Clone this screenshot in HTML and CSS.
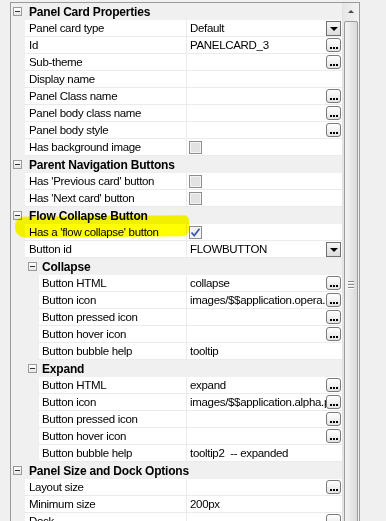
FILE: index.html
```html
<!DOCTYPE html>
<html lang="en">

<head>
    <meta charset="UTF-8">
    <meta name="viewport" content="width=device-width, initial-scale=1.0">
    <title>Panel Card Properties</title>
    <link rel="stylesheet" href="styles.css">
</head>

<body>
    <div class="wrap">
        <div class="grid">
            <div class="rows">
                <div class="cat"><span class="tog"></span><span class="cat-text">Panel Card Properties</span></div>
                <div class="row"><div class="gutter"></div><div class="name">Panel card type</div><div class="val"><span class="text">Default</span><span class="drop"></span></div></div>
                <div class="row"><div class="gutter"></div><div class="name">Id</div><div class="val"><span class="text">PANELCARD_3</span><span class="dots"></span></div></div>
                <div class="row"><div class="gutter"></div><div class="name">Sub-theme</div><div class="val"><span class="text"></span><span class="dots"></span></div></div>
                <div class="row"><div class="gutter"></div><div class="name">Display name</div><div class="val"><span class="text"></span></div></div>
                <div class="row"><div class="gutter"></div><div class="name">Panel Class name</div><div class="val"><span class="text"></span><span class="dots"></span></div></div>
                <div class="row"><div class="gutter"></div><div class="name">Panel body class name</div><div class="val"><span class="text"></span><span class="dots"></span></div></div>
                <div class="row"><div class="gutter"></div><div class="name">Panel body style</div><div class="val"><span class="text"></span><span class="dots"></span></div></div>
                <div class="row"><div class="gutter"></div><div class="name">Has background image</div><div class="val"><span class="chk"></span></div></div>

                <div class="cat"><span class="tog"></span><span class="cat-text">Parent Navigation Buttons</span></div>
                <div class="row"><div class="gutter"></div><div class="name">Has 'Previous card' button</div><div class="val"><span class="chk"></span></div></div>
                <div class="row"><div class="gutter"></div><div class="name">Has 'Next card' button</div><div class="val"><span class="chk"></span></div></div>

                <div class="cat"><span class="tog"></span><span class="cat-text">Flow Collapse Button</span></div>
                <div class="row"><div class="gutter"></div><div class="name">Has a 'flow collapse' button</div><div class="val"><span class="chk on"><svg width="11" height="11" viewBox="0 0 11 11"><path d="M1.5 5.5 L4.2 8.5 L9.5 1.8" fill="none" stroke="#3a5cb0" stroke-width="1.8"/></svg></span></div></div>
                <div class="row"><div class="gutter"></div><div class="name">Button id</div><div class="val"><span class="text">FLOWBUTTON</span><span class="drop"></span></div></div>

                <div class="cat sub"><span class="tog"></span><span class="cat-text">Collapse</span></div>
                <div class="row sub"><div class="gutter"></div><div class="name">Button HTML</div><div class="val"><span class="text">collapse</span><span class="dots"></span></div></div>
                <div class="row sub"><div class="gutter"></div><div class="name">Button icon</div><div class="val"><span class="text">images/$$application.opera.png</span><span class="dots"></span></div></div>
                <div class="row sub"><div class="gutter"></div><div class="name">Button pressed icon</div><div class="val"><span class="text"></span><span class="dots"></span></div></div>
                <div class="row sub"><div class="gutter"></div><div class="name">Button hover icon</div><div class="val"><span class="text"></span><span class="dots"></span></div></div>
                <div class="row sub"><div class="gutter"></div><div class="name">Button bubble help</div><div class="val"><span class="text">tooltip</span></div></div>

                <div class="cat sub"><span class="tog"></span><span class="cat-text">Expand</span></div>
                <div class="row sub"><div class="gutter"></div><div class="name">Button HTML</div><div class="val"><span class="text">expand</span><span class="dots"></span></div></div>
                <div class="row sub"><div class="gutter"></div><div class="name">Button icon</div><div class="val"><span class="text">images/$$application.alpha.png</span><span class="dots"></span></div></div>
                <div class="row sub"><div class="gutter"></div><div class="name">Button pressed icon</div><div class="val"><span class="text"></span><span class="dots"></span></div></div>
                <div class="row sub"><div class="gutter"></div><div class="name">Button hover icon</div><div class="val"><span class="text"></span><span class="dots"></span></div></div>
                <div class="row sub"><div class="gutter"></div><div class="name">Button bubble help</div><div class="val"><span class="text">tooltip2&nbsp; -- expanded</span></div></div>

                <div class="cat"><span class="tog"></span><span class="cat-text">Panel Size and Dock Options</span></div>
                <div class="row"><div class="gutter"></div><div class="name">Layout size</div><div class="val"><span class="text"></span><span class="dots"></span></div></div>
                <div class="row"><div class="gutter"></div><div class="name">Minimum size</div><div class="val"><span class="text">200px</span></div></div>
                <div class="row"><div class="gutter"></div><div class="name">Dock</div><div class="val"><span class="text"></span><span class="dots"></span></div></div>
            </div>
            <div class="scroll">
                <div class="arrow"></div>
                <div class="thumb"><span class="grip"></span></div>
            </div>
            <!-- marker stroke drawn over the row -->
            <div class="marker"></div>
        </div>
    </div>
</body>

</html>
```

FILE: styles.css
```css
body {
    margin: 0;
    height: 521px;
    overflow: hidden;
    background: #f0f0f0;
    font-family: 'Liberation Sans', Arial, sans-serif;
    font-size: 11.5px;
    letter-spacing: -0.32px;
    color: #000;
}

.wrap {
    padding: 2px 0 0 10px;
}

.grid {
    position: relative;
    display: flex;
    width: 348px;
    height: 540px;
    border: 1px solid #9a9a9a;
    background: #fff;
}

.rows {
    width: 331px;
}

/* category rows */
.cat {
    display: flex;
    align-items: center;
    height: 17px;
    background: #f0f0f0;
}

.tog {
    position: relative;
    width: 7px;
    height: 7px;
    margin-left: 2px;
    border: 1px solid #9a9a9a;
    background: linear-gradient(#ffffff, #e6e6e6);
}

.tog::after {
    content: "";
    position: absolute;
    left: 1px;
    top: 3px;
    width: 5px;
    height: 1px;
    background: #333;
}

.cat-text {
    margin-left: 7px;
    font-weight: bold;
    font-size: 12px;
    letter-spacing: -0.2px;
}

.cat.sub .tog {
    margin-left: 17px;
}

.cat.sub .cat-text {
    margin-left: 5px;
}

/* property rows */
.row {
    display: flex;
    height: 17px;
}

.gutter {
    width: 14px;
    background: #f0f0f0;
}

.row.sub .gutter {
    width: 28px;
}

.name {
    box-sizing: border-box;
    width: 162px;
    height: 17px;
    padding-left: 4px;
    line-height: 16px;
    border-right: 1px solid #ebebeb;
    border-bottom: 1px solid #ebebeb;
    white-space: nowrap;
    overflow: hidden;
}

.row.sub .name {
    width: 148px;
    padding-left: 3px;
}

.val {
    box-sizing: border-box;
    display: flex;
    align-items: center;
    flex: 1;
    min-width: 0;
    height: 17px;
    padding-left: 3px;
    padding-right: 1px;
    border-bottom: 1px solid #ebebeb;
}

.text {
    flex: 1;
    min-width: 0;
    line-height: 16px;
    white-space: nowrap;
    overflow: hidden;
}

.dots {
    position: relative;
    box-sizing: border-box;
    width: 15px;
    height: 14px;
    border: 1px solid #7a7a7a;
    border-radius: 3px;
    background: linear-gradient(#ffffff, #e4e4e4);
}

.dots::after {
    content: "";
    position: absolute;
    left: 3px;
    bottom: 2px;
    width: 2px;
    height: 2px;
    background: #000;
    box-shadow: 3px 0 #000, 6px 0 #000;
}

.drop {
    position: relative;
    box-sizing: border-box;
    width: 15px;
    height: 15px;
    border: 1px solid #707070;
    background: linear-gradient(#f6f6f6, #dcdcdc);
}

.drop::after {
    content: "";
    position: absolute;
    left: 3px;
    top: 5px;
    border-left: 4px solid transparent;
    border-right: 4px solid transparent;
    border-top: 4px solid #000;
}

.chk {
    box-sizing: border-box;
    display: flex;
    align-items: center;
    justify-content: center;
    width: 13px;
    height: 13px;
    margin-left: -1px;
    border: 1px solid #8e8e8e;
    background: #e2e2e2;
    box-shadow: inset 0 0 0 1px #f4f4f4;
}

.chk.on {
    background: #f2f2f2;
}

/* scrollbar */
.scroll {
    width: 16px;
    border-left: 1px solid #e2e2e2;
    background: linear-gradient(to right, #e6e6e6, #f2f2f2);
}

.arrow {
    position: relative;
    height: 17px;
}

.arrow::after {
    content: "";
    position: absolute;
    left: 5px;
    top: 7px;
    border-left: 3px solid transparent;
    border-right: 3px solid transparent;
    border-bottom: 3px solid #4a4a4a;
}

.thumb {
    display: flex;
    align-items: center;
    justify-content: center;
    box-sizing: border-box;
    height: 527px;
    margin: 1px 1px 0 1px;
    border: 1px solid #9b9b9b;
    border-radius: 2px;
    background: linear-gradient(to right, #f4f4f4, #dadada);
}

.grip {
    width: 6px;
    height: 1px;
    background: #888;
    box-shadow: 0 -3px #888, 0 3px #888, 0 -2px #fff, 0 1px #fff, 0 4px #fff;
}

/* yellow marker over the flow collapse row */
.marker {
    position: absolute;
    left: 4px;
    top: 213px;
    width: 174px;
    height: 21px;
    border-radius: 9px 5px 6px 10px;
    background: #ffff00;
    filter: blur(0.6px);
    mix-blend-mode: multiply;
    transform: rotate(-0.5deg);
}
```
